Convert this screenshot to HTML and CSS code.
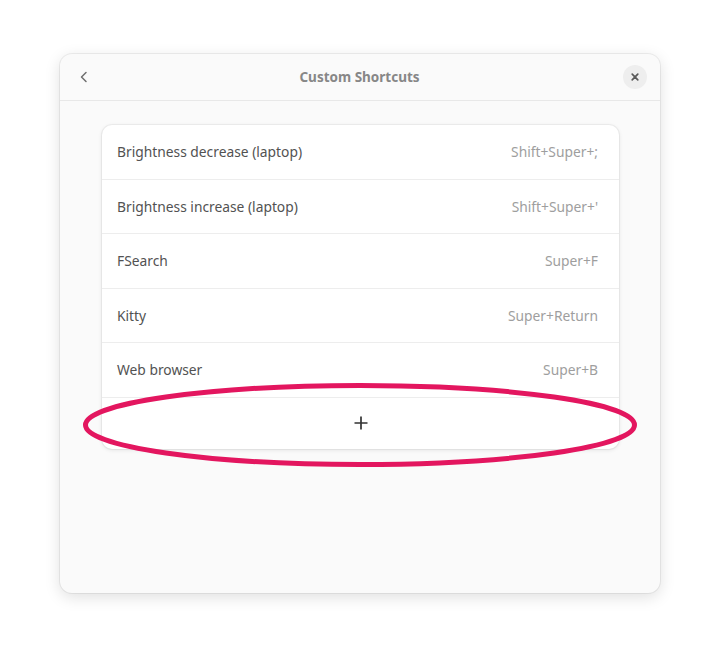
FILE: index.html
```html
<!DOCTYPE html>
<html lang="en">
<head>
  <meta charset="UTF-8">
  <title>Custom Shortcuts</title>
  <link rel="stylesheet" href="styles.css">
</head>
<body>
  <div class="desktop">
    <!-- Dialog mit Kopfzeile und Liste der Tastenkürzel -->
    <div class="dialog">
      <header class="headerbar">
        <button class="icon-btn back" aria-label="Back">
          <svg width="16" height="16" viewBox="0 0 16 16"><path d="M10 3.5 5.5 8l4.5 4.5" fill="none" stroke="#6e6e6e" stroke-width="1.5" stroke-linecap="round" stroke-linejoin="round"/></svg>
        </button>
        <h1 class="title">Custom Shortcuts</h1>
        <button class="icon-btn close" aria-label="Close">
          <svg width="10" height="10" viewBox="0 0 10 10"><path d="M2.2 2.2l5.6 5.6M7.8 2.2 2.2 7.8" stroke="#5a5a5a" stroke-width="1.7" stroke-linecap="round"/></svg>
        </button>
      </header>

      <div class="content">
        <ul class="boxed-list">
          <li class="row"><span class="label">Brightness decrease (laptop)</span><span class="accel">Shift+Super+;</span></li>
          <li class="row"><span class="label">Brightness increase (laptop)</span><span class="accel">Shift+Super+'</span></li>
          <li class="row"><span class="label">FSearch</span><span class="accel">Super+F</span></li>
          <li class="row"><span class="label">Kitty</span><span class="accel">Super+Return</span></li>
          <li class="row"><span class="label">Web browser</span><span class="accel">Super+B</span></li>
          <li class="row add-row">
            <svg width="16" height="16" viewBox="0 0 16 16"><path d="M8 1.5v13M1.5 8h13" stroke="#333" stroke-width="1.7"/></svg>
          </li>
        </ul>
      </div>
    </div>
  </div>

  <!-- Markierung um die Hinzufügen-Zeile -->
  <svg class="highlight" width="556" height="86" viewBox="0 0 556 86">
    <ellipse cx="278" cy="43" rx="274.5" ry="39.5" fill="none" stroke="#e3165f" stroke-width="5"/>
  </svg>
</body>
</html>
```

FILE: styles.css
```css
/* Grundlayout */
body, html {
  margin: 0;
  padding: 0;
  background: #fff;
  font-family: "Noto Sans", "Open Sans", sans-serif;
}

.desktop {
  padding: 54px 60px 66px;
}

/* Dialogfenster */
.dialog {
  height: 539px;
  background: #fafafa;
  border-radius: 12px;
  box-shadow: 0 0 0 1px rgba(0,0,0,0.06), 0 4px 16px rgba(0,0,0,0.13);
  display: flex;
  flex-direction: column;
}

/* Kopfzeile */
.headerbar {
  height: 46px;
  border-bottom: 1px solid #e8e8e8;
  display: flex;
  align-items: center;
  justify-content: space-between;
  padding: 0 13px 0 12px;
}

.title {
  margin: 0;
  font-size: 13.5px;
  font-weight: 700;
  color: #878787;
}

.icon-btn {
  border: none;
  background: transparent;
  padding: 0;
  width: 24px;
  height: 24px;
  border-radius: 50%;
  display: flex;
  align-items: center;
  justify-content: center;
}

.icon-btn.close {
  background: #eeeeee;
}

/* Inhalt */
.content {
  padding: 24px 41px 0 42px;
}

.boxed-list {
  list-style: none;
  margin: 0;
  padding: 0;
  background: #fff;
  border-radius: 10px;
  box-shadow: 0 0 0 1px rgba(0,0,0,0.04), 0 1px 4px rgba(0,0,0,0.1);
}

.row {
  height: 54.5px;
  display: flex;
  align-items: center;
  justify-content: space-between;
  padding: 0 21px 0 15px;
  border-bottom: 1px solid #ededed;
  box-sizing: border-box;
  font-size: 13.8px;
}

.label {
  color: #525252;
}

.accel {
  color: #9e9e9e;
}

.add-row {
  height: 51px;
  border-bottom: none;
  justify-content: center;
  padding: 0;
}

/* Rote Ellipse über der Liste */
.highlight {
  position: absolute;
  left: 82px;
  top: 382px;
}
```
